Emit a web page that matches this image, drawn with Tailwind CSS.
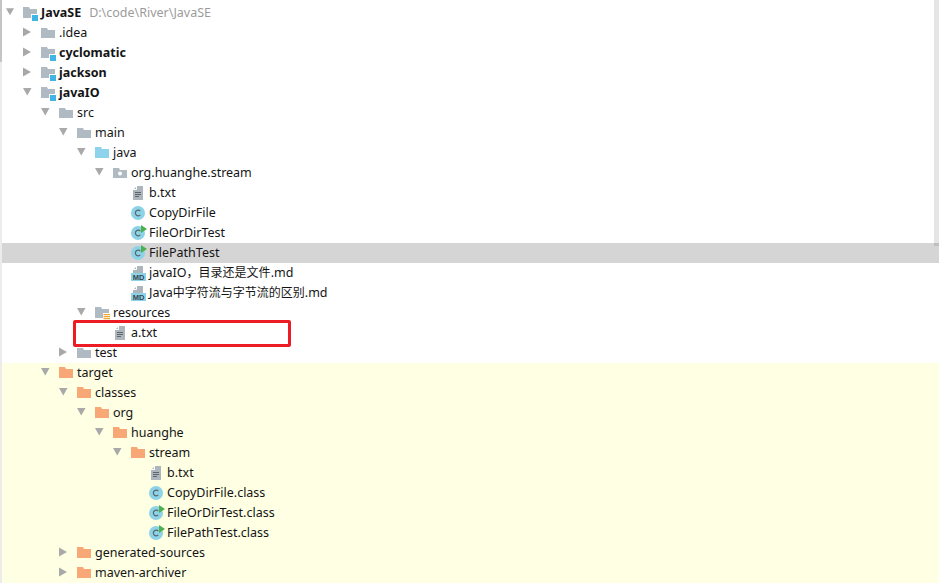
<!DOCTYPE html>
<html lang="en">
<head>
<meta charset="UTF-8">
<title>Project tree</title>
<script src="https://cdn.jsdelivr.net/npm/@tailwindcss/browser@4"></script>
</head>
<body class="bg-white overflow-hidden">
<svg class="hidden" xmlns="http://www.w3.org/2000/svg">
  <symbol id="down" viewBox="0 0 18 20"><path d="M0 5h8.500l-4.250 7.500z" fill="#a9a9a9"/></symbol>
  <symbol id="right" viewBox="0 0 18 20"><path d="M0 4.500v9l8-4.500z" fill="#a9a9a9"/></symbol>
  <symbol id="folder" viewBox="0 0 18 20"><path d="M0 5h6l1 2h7v8H0z" fill="#afbac3"/></symbol>
  <symbol id="module" viewBox="0 0 18 20"><path d="M0 4h6l1 2h7v9H0z" fill="#afbac3"/><path d="M8 11h7v7H8z" fill="#fff"/><path d="M9 12h6v6H9z" fill="#3fb4e5"/></symbol>
  <symbol id="source" viewBox="0 0 18 20"><path d="M0 4h6l1 2h7v9H0z" fill="#8dd3ec"/></symbol>
  <symbol id="package" viewBox="0 0 18 20"><path d="M0 5h6l1 2h7v8H0z" fill="#afbac3"/><circle cx="7" cy="10.500" r="2" fill="#fff"/></symbol>
  <symbol id="resources" viewBox="0 0 18 20"><path d="M0 4h6l1 2h7v9H0z" fill="#afbac3"/><path d="M8 10h7v7H8z" fill="#fff"/><path d="M8.500 11h6.500v1.200H8.500zM8.500 13h6.500v1.200H8.500zM8.500 15h6.500v1.200H8.500z" fill="#f0a732"/></symbol>
  <symbol id="orange" viewBox="0 0 18 20"><path d="M0 4h6l1 2h7v9H0z" fill="#f8a876"/></symbol>
  <symbol id="text" viewBox="0 0 18 20"><path d="M6 3h6v14H2V7z" fill="#adb6bd"/><path d="M5.500 3v3.500H2" fill="none" stroke="#fff"/><path d="M4 9.500h6M4 11.500h6M4 13.500h4" stroke="#5f666b"/></symbol>
  <symbol id="cls" viewBox="0 0 18 20"><circle cx="7" cy="10" r="7" fill="#8dd3e8"/><path d="M9.300 8.200a2.800 2.800 0 1 0 0 3.600" fill="none" stroke="#5b676e" stroke-width="1.200"/></symbol>
  <symbol id="test" viewBox="0 0 18 20"><circle cx="7" cy="10" r="7" fill="#8dd3e8"/><path d="M9.300 8.200a2.800 2.800 0 1 0 0 3.600" fill="none" stroke="#5b676e" stroke-width="1.200"/><path d="M10 2v8l6-4z" fill="#4caf50"/></symbol>
  <symbol id="md" viewBox="0 0 18 20"><path d="M6 3h6v7H2V7z" fill="#adb6bd"/><path d="M5.500 3v3.500H2" fill="none" stroke="#fff"/><path d="M0 10h15v8H0z" fill="#8dd3e8"/><text x="7.500" y="16.800" text-anchor="middle" font-family="Liberation Sans" font-size="7.500" font-weight="700" fill="#38474f">MD</text></symbol>
</svg>

<div class="relative h-[583px] pt-[3px] border-l-2 border-[#ececec] text-[12.5px] leading-[19px] text-[#141414] font-['Noto_Sans','Noto_Sans_CJK_SC',sans-serif]">
  <!-- tree rows -->
  <div class="flex h-5 pl-[4px]"><svg class="w-[17px] h-5 shrink-0"><use href="#down"/></svg><svg class="w-[18px] h-5 shrink-0"><use href="#module"/></svg><span class="font-bold">JavaSE</span><span class="ml-2 text-[#9b9b9b]">D:\code\River\JavaSE</span></div>
  <div class="flex h-5 pl-[21px]"><svg class="w-[18px] h-5 shrink-0"><use href="#right"/></svg><svg class="w-[18px] h-5 shrink-0"><use href="#folder"/></svg><span>.idea</span></div>
  <div class="flex h-5 pl-[21px]"><svg class="w-[18px] h-5 shrink-0"><use href="#right"/></svg><svg class="w-[18px] h-5 shrink-0"><use href="#module"/></svg><span class="font-bold">cyclomatic</span></div>
  <div class="flex h-5 pl-[21px]"><svg class="w-[18px] h-5 shrink-0"><use href="#right"/></svg><svg class="w-[18px] h-5 shrink-0"><use href="#module"/></svg><span class="font-bold">jackson</span></div>
  <div class="flex h-5 pl-[21px]"><svg class="w-[18px] h-5 shrink-0"><use href="#down"/></svg><svg class="w-[18px] h-5 shrink-0"><use href="#module"/></svg><span class="font-bold">javaIO</span></div>
  <div class="flex h-5 pl-[39px]"><svg class="w-[18px] h-5 shrink-0"><use href="#down"/></svg><svg class="w-[18px] h-5 shrink-0"><use href="#folder"/></svg><span>src</span></div>
  <div class="flex h-5 pl-[57px]"><svg class="w-[18px] h-5 shrink-0"><use href="#down"/></svg><svg class="w-[18px] h-5 shrink-0"><use href="#folder"/></svg><span>main</span></div>
  <div class="flex h-5 pl-[75px]"><svg class="w-[18px] h-5 shrink-0"><use href="#down"/></svg><svg class="w-[18px] h-5 shrink-0"><use href="#source"/></svg><span>java</span></div>
  <div class="flex h-5 pl-[93px]"><svg class="w-[18px] h-5 shrink-0"><use href="#down"/></svg><svg class="w-[18px] h-5 shrink-0"><use href="#package"/></svg><span>org.huanghe.stream</span></div>
  <div class="flex h-5 pl-[129px]"><svg class="w-[18px] h-5 shrink-0"><use href="#text"/></svg><span>b.txt</span></div>
  <div class="flex h-5 pl-[129px]"><svg class="w-[18px] h-5 shrink-0"><use href="#cls"/></svg><span>CopyDirFile</span></div>
  <div class="flex h-5 pl-[129px]"><svg class="w-[18px] h-5 shrink-0"><use href="#test"/></svg><span>FileOrDirTest</span></div>
  <div class="flex h-5 pl-[129px] bg-[#d5d5d5]"><svg class="w-[18px] h-5 shrink-0"><use href="#test"/></svg><span>FilePathTest</span></div>
  <div class="flex h-5 pl-[129px]"><svg class="w-[18px] h-5 shrink-0"><use href="#md"/></svg><span>javaIO<span class="text-[12px]">，目录还是文件</span>.md</span></div>
  <div class="flex h-5 pl-[129px]"><svg class="w-[18px] h-5 shrink-0"><use href="#md"/></svg><span>Java<span class="text-[12px]">中字符流与字节流的区别</span>.md</span></div>
  <div class="flex h-5 pl-[75px]"><svg class="w-[18px] h-5 shrink-0"><use href="#down"/></svg><svg class="w-[18px] h-5 shrink-0"><use href="#resources"/></svg><span>resources</span></div>
  <div class="flex h-5 pl-[111px]"><svg class="w-[18px] h-5 shrink-0"><use href="#text"/></svg><span>a.txt</span></div>
  <div class="flex h-5 pl-[57px]"><svg class="w-[18px] h-5 shrink-0"><use href="#right"/></svg><svg class="w-[18px] h-5 shrink-0"><use href="#folder"/></svg><span>test</span></div>

  <!-- excluded output folder -->
  <div class="bg-[#ffffe4]">
    <div class="flex h-5 pl-[39px]"><svg class="w-[18px] h-5 shrink-0"><use href="#down"/></svg><svg class="w-[18px] h-5 shrink-0"><use href="#orange"/></svg><span>target</span></div>
    <div class="flex h-5 pl-[57px]"><svg class="w-[18px] h-5 shrink-0"><use href="#down"/></svg><svg class="w-[18px] h-5 shrink-0"><use href="#orange"/></svg><span>classes</span></div>
    <div class="flex h-5 pl-[75px]"><svg class="w-[18px] h-5 shrink-0"><use href="#down"/></svg><svg class="w-[18px] h-5 shrink-0"><use href="#orange"/></svg><span>org</span></div>
    <div class="flex h-5 pl-[93px]"><svg class="w-[18px] h-5 shrink-0"><use href="#down"/></svg><svg class="w-[18px] h-5 shrink-0"><use href="#orange"/></svg><span>huanghe</span></div>
    <div class="flex h-5 pl-[111px]"><svg class="w-[18px] h-5 shrink-0"><use href="#down"/></svg><svg class="w-[18px] h-5 shrink-0"><use href="#orange"/></svg><span>stream</span></div>
    <div class="flex h-5 pl-[147px]"><svg class="w-[18px] h-5 shrink-0"><use href="#text"/></svg><span>b.txt</span></div>
    <div class="flex h-5 pl-[147px]"><svg class="w-[18px] h-5 shrink-0"><use href="#cls"/></svg><span>CopyDirFile.class</span></div>
    <div class="flex h-5 pl-[147px]"><svg class="w-[18px] h-5 shrink-0"><use href="#test"/></svg><span>FileOrDirTest.class</span></div>
    <div class="flex h-5 pl-[147px]"><svg class="w-[18px] h-5 shrink-0"><use href="#test"/></svg><span>FilePathTest.class</span></div>
    <div class="flex h-5 pl-[57px]"><svg class="w-[18px] h-5 shrink-0"><use href="#right"/></svg><svg class="w-[18px] h-5 shrink-0"><use href="#orange"/></svg><span>generated-sources</span></div>
    <div class="flex h-5 pl-[57px]"><svg class="w-[18px] h-5 shrink-0"><use href="#right"/></svg><svg class="w-[18px] h-5 shrink-0"><use href="#orange"/></svg><span>maven-archiver</span></div>
  </div>

  <!-- red annotation and scrollbars sit on top of the tree -->
  <div class="absolute left-[71px] top-[320px] w-[218px] h-[27px] border-[3px] border-[#ed1c24] rounded-[2px]"></div>
  <div class="absolute right-0 top-0 w-[5px] h-[246px] bg-black/10"></div>
  <div class="absolute left-[-2px] top-0 w-[2px] h-[62px] bg-[#c4c4c4]"></div>
</div>
</body>
</html>
